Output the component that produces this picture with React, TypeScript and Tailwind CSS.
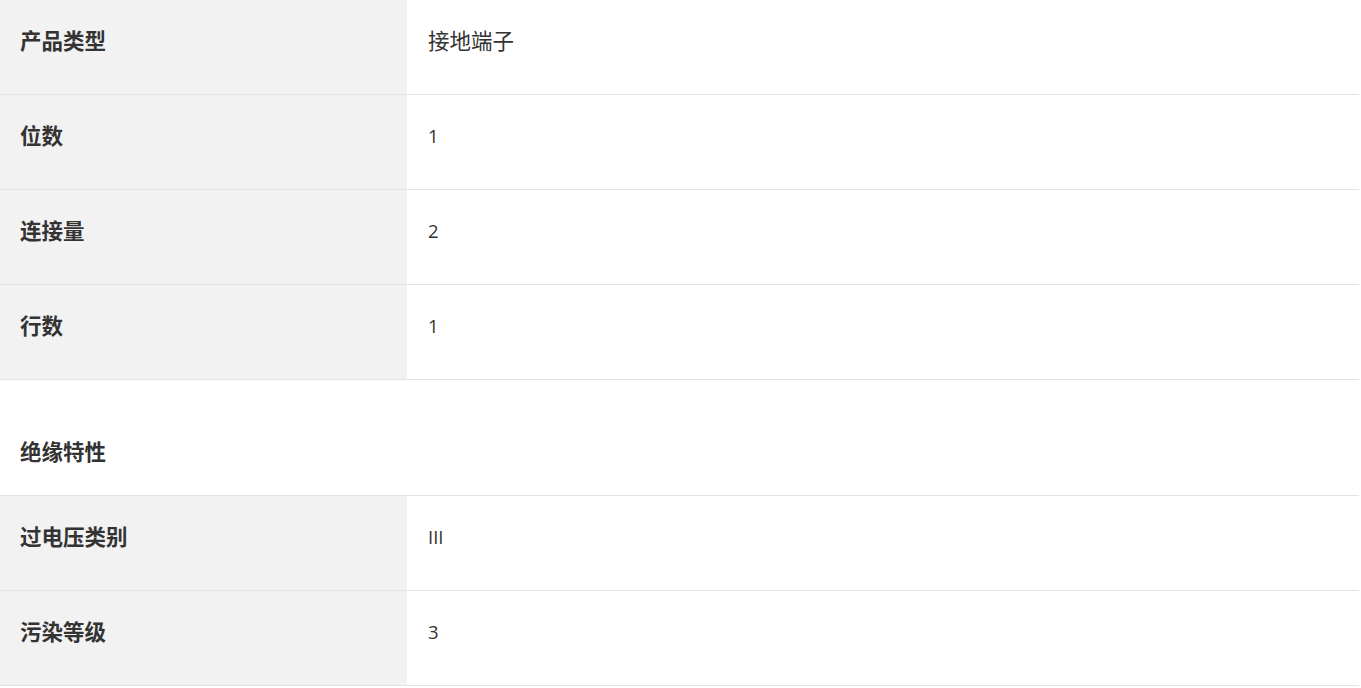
const ROWS_TOP = [
  { label: "产品类型", value: "接地端子" },
  { label: "位数", value: "1" },
  { label: "连接量", value: "2" },
  { label: "行数", value: "1" },
];

const ROWS_INSULATION = [
  { label: "过电压类别", value: "III" },
  { label: "污染等级", value: "3" },
];

const FONT = "font-['Open_Sans','Noto_Sans_CJK_SC',sans-serif]";

function Row({ label, value }: { label: string; value: string }) {
  // CJK values render larger than the digits in the original
  const isCjk = /[\u4e00-\u9fff]/.test(value);
  return (
    <div className="flex border-b border-[#e4e4e8]">
      <div className="w-[407px] shrink-0 bg-[#f2f2f2] pl-5 pt-[25px] pb-[39px] text-[21.5px] leading-[30px] font-bold text-[#333] font-['Noto_Sans_CJK_SC',sans-serif]">
        {label}
      </div>
      <div
        className={
          isCjk
            ? "flex-1 pl-[21px] pt-[25px] pb-[39px] text-[21.5px] leading-[30px] text-[#333] font-['Noto_Sans_CJK_SC',sans-serif]"
            : "flex-1 pl-[21px] pt-[26px] pb-[38px] text-[18.5px] leading-[30px] text-[#333]"
        }
      >
        {value}
      </div>
    </div>
  );
}

export default function App() {
  return (
    <div className={`w-[1359px] bg-white ${FONT}`}>
      {ROWS_TOP.map((r) => (
        <Row key={r.label} {...r} />
      ))}
      <div className="border-b border-[#e4e4e8] pl-5 pt-[56px] pb-[29px] text-[21.5px] leading-[30px] font-bold text-[#333] font-['Noto_Sans_CJK_SC',sans-serif]">
        绝缘特性
      </div>
      {ROWS_INSULATION.map((r) => (
        <Row key={r.label} {...r} />
      ))}
    </div>
  );
}
